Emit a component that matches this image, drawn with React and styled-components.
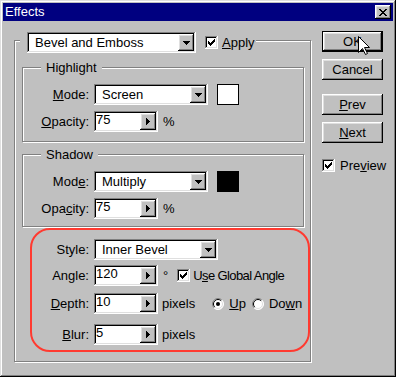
import React from 'react';
import styled, { createGlobalStyle, css } from 'styled-components';

const GlobalStyle = createGlobalStyle`
  html, body {
    margin: 0;
    padding: 0;
    background: #c0c0c0;
  }
  body {
    font-family: "Liberation Sans", Arial, sans-serif;
    font-size: 13px;
    color: #000;
  }
  * {
    box-sizing: border-box;
  }
`;

const raised = css`
  box-shadow: inset -1px -1px #000, inset 1px 1px #fff, inset -2px -2px #808080,
    inset 2px 2px #dfdfdf;
`;

const sunken = css`
  box-shadow: inset -1px -1px #fff, inset 1px 1px #808080, inset -2px -2px #dfdfdf,
    inset 2px 2px #000;
`;

const etched = css`
  border: 1px solid #808080;
  box-shadow: inset 1px 1px #fff, 1px 1px #fff;
`;

const Window = styled.div`
  position: relative;
  width: 396px;
  height: 377px;
  padding: 3px;
  background: #c0c0c0;
  box-shadow: inset -1px -1px #000, inset 1px 1px #dfdfdf, inset -2px -2px #808080,
    inset 2px 2px #fff;
`;

const TitleBar = styled.div`
  display: flex;
  align-items: center;
  justify-content: space-between;
  height: 18px;
  padding: 0 2px;
  background: #000080;
  color: #fff;
`;

const Title = styled.span`
  line-height: 18px;
`;

const CloseButton = styled.span`
  display: flex;
  align-items: center;
  justify-content: center;
  width: 16px;
  height: 14px;
  background: #c0c0c0;
  ${raised}
`;

const Body = styled.div`
  display: flex;
  align-items: flex-start;
  padding-left: 11px;
`;

const MainFrame = styled.fieldset`
  width: 297px;
  min-width: 0;
  margin: 7px 0 0;
  padding: 7px 6px 9px 7px;
  ${etched}
`;

const MainLegend = styled.legend`
  display: flex;
  align-items: center;
  margin-left: -2px;
  padding: 4px 1px 0 7px;
  background: #c0c0c0;
`;

const Group = styled.fieldset`
  width: 282px;
  min-width: 0;
  margin: ${(p) => p.$mt || 0}px 0 0;
  padding: 9px 0 ${(p) => p.$pb}px;
  ${etched}
`;

const GroupLegend = styled.legend`
  margin-left: 18px;
  padding: 0 5px;
  line-height: 15px;
  background: #c0c0c0;
`;

const Row = styled.div`
  display: flex;
  align-items: center;
  height: 21px;
  margin-top: ${(p) => p.$mt || 0}px;
`;

const Label = styled.span`
  width: ${(p) => p.$w}px;
  margin-right: 5px;
  text-align: right;
  white-space: nowrap;
`;

const Key = styled.span`
  text-decoration: underline;
  text-underline-offset: 1px;
`;

const SelectBox = styled.div`
  display: flex;
  width: ${(p) => p.$w}px;
  height: 21px;
  padding: 2px;
  background: #fff;
  ${sunken}
`;

const SelectText = styled.span`
  flex: 1;
  padding-left: 6px;
  line-height: 17px;
  white-space: nowrap;
  overflow: hidden;
`;

const ArrowButton = styled.span`
  display: flex;
  align-items: center;
  justify-content: center;
  width: 16px;
  background: #c0c0c0;
  ${raised}
`;

const NumBox = styled.div`
  display: flex;
  width: 64px;
  height: 21px;
  padding: 2px;
  background: #fff;
  ${sunken}
`;

const NumText = styled.span`
  flex: 1;
  line-height: 13px;
`;

const Unit = styled.span`
  margin-left: ${(p) => p.$ml}px;
`;

const Swatch = styled.span`
  width: 22px;
  height: 21px;
  margin-left: 9px;
  border: 1px solid #000;
  background: ${(p) => p.$color};
`;

const CheckWrap = styled.label`
  display: flex;
  align-items: center;
  gap: ${(p) => p.$gap || 4}px;
  margin-left: ${(p) => p.$ml || 0}px;
  white-space: nowrap;
  letter-spacing: ${(p) => p.$tight || 0}px;
`;

const CheckBox = styled.span`
  display: flex;
  align-items: center;
  justify-content: center;
  flex-shrink: 0;
  width: 13px;
  height: 13px;
  background: #fff;
  ${sunken}
`;

const RadioWrap = styled.label`
  display: flex;
  align-items: center;
  gap: 5px;
  margin-left: ${(p) => p.$ml}px;
`;

const BevelBox = styled.div`
  margin: 1px -6px 0 8px;
  padding: 9px 0 5px;
  border: 2px solid #ff3a30;
  border-radius: 20px;
`;

const ButtonColumn = styled.div`
  display: flex;
  flex-direction: column;
  align-items: flex-start;
  margin: 10px 0 0 11px;
`;

const Button = styled.button`
  width: 61px;
  height: 21px;
  margin-top: ${(p) => p.$mt || 0}px;
  padding: 0;
  border: 0;
  font: inherit;
  color: #000;
  background: #c0c0c0;
  ${raised}
  ${(p) =>
    p.$default &&
    css`
      box-shadow: inset 0 0 0 1px #000, inset -2px -2px #000, inset 2px 2px #fff,
        inset -3px -3px #808080, inset 3px 3px #dfdfdf;
    `}
`;

const PreviewRow = styled.div`
  margin-top: 15px;
`;

const Cursor = styled.svg`
  position: absolute;
  left: 358px;
  top: 36px;
`;

const DownTri = () => (
  <svg width="7" height="4" viewBox="0 0 7 4">
    <path d="M0 0h7v1H0zM1 1h5v1H1zM2 2h3v1H2zM3 3h1v1H3z" fill="#000" />
  </svg>
);

const RightTri = () => (
  <svg width="4" height="7" viewBox="0 0 4 7">
    <path d="M0 0h1v7H0zM1 1h1v5H1zM2 2h1v3H2zM3 3h1v1H3z" fill="#000" />
  </svg>
);

const CloseX = () => (
  <svg width="8" height="7" viewBox="0 0 8 7">
    <path
      d="M0 0h2v1H0zM6 0h2v1H6zM1 1h2v1H1zM5 1h2v1H5zM2 2h4v1H2zM3 3h2v1H3zM2 4h4v1H2zM1 5h2v1H1zM5 5h2v1H5zM0 6h2v1H0zM6 6h2v1H6z"
      fill="#000"
    />
  </svg>
);

const CheckMark = () => (
  <svg width="7" height="7" viewBox="0 0 7 7">
    <path d="M0 2h1v1h1v1h1V3h1V2h1V1h1V0h1v3H6v1H5v1H4v1H3v1H2V6H1V5H0z" fill="#000" />
  </svg>
);

function Select({ width, value }) {
  return (
    <SelectBox $w={width}>
      <SelectText>{value}</SelectText>
      <ArrowButton>
        <DownTri />
      </ArrowButton>
    </SelectBox>
  );
}

function NumField({ value }) {
  return (
    <NumBox>
      <NumText>{value}</NumText>
      <ArrowButton>
        <RightTri />
      </ArrowButton>
    </NumBox>
  );
}

function Check({ children, ml, gap, tight }) {
  return (
    <CheckWrap $ml={ml} $gap={gap} $tight={tight}>
      <CheckBox>
        <CheckMark />
      </CheckBox>
      <span>{children}</span>
    </CheckWrap>
  );
}

function Radio({ checked, children, ml }) {
  return (
    <RadioWrap $ml={ml}>
      <svg width="12" height="12" viewBox="0 0 12 12">
        <circle cx="6" cy="6" r="5.5" fill="#fff" />
        <path d="M2.1 9.9A5.5 5.5 0 0 1 9.9 2.1" fill="none" stroke="#808080" />
        <path d="M9.9 2.1A5.5 5.5 0 0 1 2.1 9.9" fill="none" stroke="#fff" />
        <path d="M2.8 9.2A4.5 4.5 0 0 1 9.2 2.8" fill="none" stroke="#000" />
        <path d="M9.2 2.8A4.5 4.5 0 0 1 2.8 9.2" fill="none" stroke="#dfdfdf" />
        {checked && <circle cx="6" cy="6" r="2" fill="#000" />}
      </svg>
      <span>{children}</span>
    </RadioWrap>
  );
}

export default function App() {
  return (
    <>
      <GlobalStyle />
      <Window>
        <TitleBar>
          <Title>Effects</Title>
          <CloseButton>
            <CloseX />
          </CloseButton>
        </TitleBar>

        <Body>
          <MainFrame>
            <MainLegend>
              <Select width={169} value="Bevel and Emboss" />
              <Check ml={9}>
                <Key>A</Key>pply
              </Check>
            </MainLegend>

            <Group $pb={9}>
              <GroupLegend>Highlight</GroupLegend>
              <Row>
                <Label $w={66}>
                  <Key>M</Key>ode:
                </Label>
                <Select width={114} value="Screen" />
                <Swatch $color="#fff" />
              </Row>
              <Row $mt={6}>
                <Label $w={66}>
                  <Key>O</Key>pacity:
                </Label>
                <NumField value="75" />
                <Unit $ml={5}>%</Unit>
              </Row>
            </Group>

            <Group $mt={5} $pb={7}>
              <GroupLegend>Shadow</GroupLegend>
              <Row>
                <Label $w={66}>
                  Mod<Key>e</Key>:
                </Label>
                <Select width={114} value="Multiply" />
                <Swatch $color="#000" />
              </Row>
              <Row $mt={6}>
                <Label $w={66}>
                  Opa<Key>c</Key>ity:
                </Label>
                <NumField value="75" />
                <Unit $ml={5}>%</Unit>
              </Row>
            </Group>

            <BevelBox>
              <Row>
                <Label $w={57}>Style:</Label>
                <Select width={124} value="Inner Bevel" />
              </Row>
              <Row $mt={5}>
                <Label $w={57}>Angle:</Label>
                <NumField value="120" />
                <Unit $ml={5}>°</Unit>
                <Check ml={9} gap={3} tight={-0.6}>
                  U<Key>s</Key>e Global Angle
                </Check>
              </Row>
              <Row $mt={7}>
                <Label $w={57}>
                  <Key>D</Key>epth:
                </Label>
                <NumField value="10" />
                <Unit $ml={4}>pixels</Unit>
                <Radio checked ml={17}>
                  <Key>U</Key>p
                </Radio>
                <Radio ml={6}>
                  Do<Key>w</Key>n
                </Radio>
              </Row>
              <Row $mt={10}>
                <Label $w={57}>
                  <Key>B</Key>lur:
                </Label>
                <NumField value="5" />
                <Unit $ml={4}>pixels</Unit>
              </Row>
            </BevelBox>
          </MainFrame>

          <ButtonColumn>
            <Button $default>OK</Button>
            <Button $mt={7}>Cancel</Button>
            <Button $mt={14}>
              <Key>P</Key>rev
            </Button>
            <Button $mt={7}>
              <Key>N</Key>ext
            </Button>
            <PreviewRow>
              <Check gap={5}>
                Pre<Key>v</Key>iew
              </Check>
            </PreviewRow>
          </ButtonColumn>
        </Body>

        <Cursor width="12" height="19" viewBox="0 0 12 19">
          <path
            d="M0.5 0.5V16.5L4.5 12.5L7.5 18.5L9.5 17.5L6.5 11.5H11.5Z"
            fill="#fff"
            stroke="#000"
            strokeLinejoin="miter"
          />
        </Cursor>
      </Window>
    </>
  );
}
